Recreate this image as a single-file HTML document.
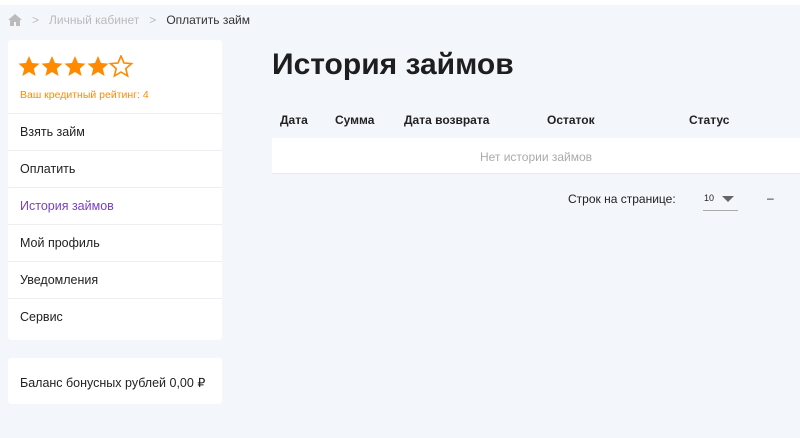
<!DOCTYPE html>
<html><head><meta charset="utf-8"><style>
*{margin:0;padding:0;box-sizing:border-box}
body{width:800px;height:438px;overflow:hidden;background:#f3f6fb;font-family:"Liberation Sans",sans-serif;position:relative;color:#222}
.top{position:absolute;left:0;top:0;width:800px;height:5px;background:#fff}
.bc{position:absolute;top:13px;left:8px;font-size:12px;color:#bbb;display:flex;align-items:center}
.bc span{margin-right:10px}
.card{position:absolute;left:8px;width:214px;background:#fff;border-radius:3px}
.stars{position:absolute;left:10px;top:15px}
.rate{position:absolute;left:12px;top:49px;font-size:10.5px;color:#ff8a00}
.item{position:absolute;left:0;width:214px;height:37px;border-top:1px solid #eceef2;font-size:12.5px;padding:11px 0 0 12px;color:#222}
h1{position:absolute;left:272px;top:48px;font-size:30px;font-weight:bold;color:#1e1e1e}
.th{position:absolute;top:113px;font-size:12px;font-weight:bold}
.row{position:absolute;left:272px;top:138px;width:528px;height:36px;background:#fff;border-bottom:1px solid #e8eaee;font-size:12px;color:#aaa;text-align:center;padding-top:12px}
</style></head><body>
<div class="top"></div>
<div class="bc"><svg width="14" height="12" viewBox="0 0 14 12" style="margin-right:10px"><path d="M7 0L0 6h2v6h4V8h2v4h4V6h2z" fill="#bbb"/></svg><span>&gt;</span><span>Личный кабинет</span><span>&gt;</span><span style="color:#333">Оплатить займ</span></div>
<div class="card" style="top:40px;height:300px">
<svg class="stars" width="125" height="24" viewBox="0 0 125 24">
<defs><path id="s" d="M11 1l3 7 7.5.6-5.7 5 1.8 7.4L11 17l-6.6 4 1.8-7.4-5.7-5L8 8z"/></defs>
<use href="#s" fill="#ff8a00"/><use href="#s" x="23" fill="#ff8a00"/><use href="#s" x="46" fill="#ff8a00"/><use href="#s" x="69" fill="#ff8a00"/><use href="#s" x="92" fill="none" stroke="#ff8a00" stroke-width="1.6"/>
</svg>
<div class="rate">Ваш кредитный рейтинг: 4</div>
<div class="item" style="top:73px">Взять займ</div>
<div class="item" style="top:110px">Оплатить</div>
<div class="item" style="top:147px;color:#7a3fc9">История займов</div>
<div class="item" style="top:184px">Мой профиль</div>
<div class="item" style="top:221px">Уведомления</div>
<div class="item" style="top:258px">Сервис</div>
</div>
<div class="card" style="top:358px;height:46px;font-size:12.5px;padding:17px 0 0 12px">Баланс бонусных рублей 0,00 ₽</div>
<h1>История займов</h1>
<div class="th" style="left:280px">Дата</div>
<div class="th" style="left:335px">Сумма</div>
<div class="th" style="left:404px">Дата возврата</div>
<div class="th" style="left:547px">Остаток</div>
<div class="th" style="left:689px">Статус</div>
<div class="row">Нет истории займов</div>
<div style="position:absolute;left:568px;top:192px;font-size:12px">Строк на странице:</div>
<div style="position:absolute;left:704px;top:193px;font-size:9px">10</div>
<div style="position:absolute;left:722px;top:196px;width:0;height:0;border-left:6px solid transparent;border-right:6px solid transparent;border-top:6px solid #666"></div>
<div style="position:absolute;left:703px;top:210px;width:35px;height:1px;background:#aaa"></div>
<div style="position:absolute;left:767px;top:191px;font-size:12px">–</div>
</body></html>
